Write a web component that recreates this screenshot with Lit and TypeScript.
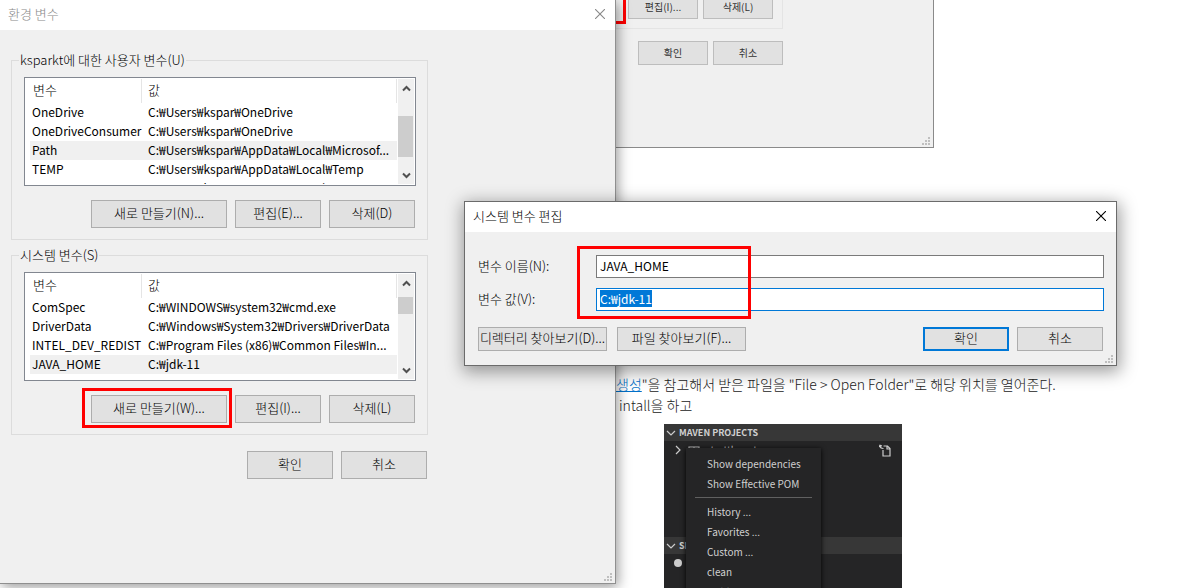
import { LitElement, html, css, svg } from "lit";
import { customElement, property } from "lit/decorators.js";
import { classMap } from "lit/directives/class-map.js";

type Row = [name: string, value: string];

const userRows: Row[] = [
  ["OneDrive", "C:₩Users₩kspar₩OneDrive"],
  ["OneDriveConsumer", "C:₩Users₩kspar₩OneDrive"],
  ["Path", "C:₩Users₩kspar₩AppData₩Local₩Microsof..."],
  ["TEMP", "C:₩Users₩kspar₩AppData₩Local₩Temp"],
  ["TMP", "C:₩Users₩kspar₩AppData₩Local₩Temp"],
];

const systemRows: Row[] = [
  ["ComSpec", "C:₩WINDOWS₩system32₩cmd.exe"],
  ["DriverData", "C:₩Windows₩System32₩Drivers₩DriverData"],
  ["INTEL_DEV_REDIST", "C:₩Program Files (x86)₩Common Files₩In..."],
  ["JAVA_HOME", "C:₩jdk-11"],
];

const closeIcon = html`<svg class="x" viewBox="0 0 10 10" width="10" height="10" aria-hidden="true">
  <path d="M0 0l10 10M10 0l-10 10" fill="none" stroke="currentColor" stroke-width="1.1" />
</svg>`;

const gripCells = [[6, 0], [3, 3], [6, 3], [0, 6], [3, 6], [6, 6]];
const grip = html`<svg class="grip" viewBox="0 0 8 8" width="8" height="8" aria-hidden="true">
  ${gripCells.map(([x, y]) => svg`<rect x=${x} y=${y} width="2" height="2" fill="#bfbfbf" />`)}
</svg>`;

const base = css`
  * { box-sizing: border-box; }
  button, input {
    font: inherit;
    color: inherit;
    margin: 0;
  }
  .btn {
    height: 28px;
    width: 86px;
    padding: 0 0 2px;
    border: 1px solid #adadad;
    border-radius: 0;
    background: #e1e1e1;
    white-space: nowrap;
    flex: none;
  }
  .close {
    border: 0;
    padding: 0;
    background: none;
    display: flex;
  }
  .titlebar {
    display: flex;
    align-items: center;
    justify-content: space-between;
    height: 30px;
    background: #fff;
  }
  .grip {
    position: absolute;
    right: 3px;
    bottom: 2px;
  }
  .mark {
    position: absolute;
    border: 3px solid #f00;
    pointer-events: none;
  }
`;

@customElement("variable-list")
class VariableList extends LitElement {
  @property({ attribute: false }) rows: Row[] = [];
  @property({ type: Number }) selected = 0;
  @property({ type: Number }) thumbTop = 0;
  @property({ type: Number }) thumbSize = 20;

  static styles = css`
    * { box-sizing: border-box; }
    :host {
      display: flex;
      height: 109px;
      padding: 1px 1px 1px 5px;
      border: 1px solid #828790;
      background: #fff;
    }
    .view {
      flex: 1;
      min-width: 0;
      overflow: hidden;
    }
    table {
      width: 100%;
      table-layout: fixed;
      border-collapse: separate;
      border-spacing: 0;
    }
    th, td {
      height: 19px;
      line-height: 17px;
      padding: 0 0 2px 6px;
      font-weight: inherit;
      text-align: left;
      white-space: nowrap;
    }
    td { font-size: 12px; font-weight: 400; }
    td:first-child { padding-left: 2px; }
    th {
      height: 24px;
      line-height: 22px;
      border-right: 1px solid #e5e5e5;
    }
    th:first-child { width: 112px; padding-left: 3px; }
    .on td { background: #f0f0f0; }
    .bar {
      flex: none;
      width: 16px;
      margin-left: 1px;
      background: #f0f0f0;
      display: grid;
      grid-template-rows: 18px 1fr 18px;
      justify-items: center;
      align-items: center;
    }
    .track { align-self: stretch; justify-self: stretch; }
    .thumb { width: 15px; background: #cdcdcd; }
    path { fill: none; stroke: #505050; stroke-width: 2; }
  `;

  render() {
    return html`
      <div class="view">
        <table>
          <thead><tr><th>변수</th><th>값</th></tr></thead>
          <tbody>
            ${this.rows.map(([name, value], i) => html`
              <tr class=${classMap({ on: i === this.selected })}><td>${name}</td><td>${value}</td></tr>`)}
          </tbody>
        </table>
      </div>
      <div class="bar">
        <svg width="9" height="7" viewBox="0 0 9 7"><path d="M1 5.5l3.5-3.5l3.5 3.5" /></svg>
        <div class="track">
          <div class="thumb" style="margin-top:${this.thumbTop}px;height:${this.thumbSize}px"></div>
        </div>
        <svg width="9" height="7" viewBox="0 0 9 7"><path d="M1 1.5l3.5 3.5l3.5-3.5" /></svg>
      </div>
    `;
  }
}

@customElement("environment-window")
class EnvironmentWindow extends LitElement {
  static styles = [base, css`
    :host {
      display: block;
      background: #f0f0f0;
      border-right: 1px solid #8f8f8f;
      border-bottom: 1px solid #8f8f8f;
      box-shadow: 2px 3px 12px rgba(0, 0, 0, .4);
    }
    .titlebar { padding: 0 10px 2px 8px; color: #888; }
    .body {
      width: 428px;
      padding: 22px 0 104px 11px;
    }
    fieldset {
      position: relative;
      min-width: 0;
      margin: 0 0 7px;
      padding: 9px 11px 11px 12px;
      border: 1px solid #dcdcdc;
    }
    legend {
      margin-left: -5px;
      padding: 0 1px;
      line-height: 16px;
    }
    .actions {
      display: flex;
      justify-content: flex-end;
      gap: 8px;
      padding: 14px 1px 0 0;
    }
    .wide { width: 136px; }
    .confirm { padding: 9px 1px 0 0; }
    .new { right: 195px; bottom: 6px; width: 150px; height: 40px; }
  `];

  render() {
    return html`
      <div class="titlebar"><span>환경 변수</span>
        <button class="close" aria-label="닫기">${closeIcon}</button></div>
      <div class="body">
        <fieldset>
          <legend>ksparkt에 대한 사용자 변수(U)</legend>
          <variable-list .rows=${userRows} .selected=${2} .thumbTop=${19} .thumbSize=${41}></variable-list>
          <div class="actions">
            <button class="btn wide">새로 만들기(N)...</button>
            <button class="btn">편집(E)...</button>
            <button class="btn">삭제(D)</button>
          </div>
        </fieldset>
        <fieldset>
          <legend>시스템 변수(S)</legend>
          <variable-list .rows=${systemRows} .selected=${3} .thumbTop=${5} .thumbSize=${17}></variable-list>
          <div class="actions">
            <button class="btn wide">새로 만들기(W)...</button>
            <button class="btn">편집(I)...</button>
            <button class="btn">삭제(L)</button>
          </div>
          <div class="mark new"></div>
        </fieldset>
        <div class="actions confirm">
          <button class="btn">확인</button>
          <button class="btn">취소</button>
        </div>
      </div>
      ${grip}
    `;
  }
}

@customElement("edit-dialog")
class EditDialog extends LitElement {
  static styles = [base, css`
    :host {
      display: block;
      background: #f0f0f0;
      border: 1px solid #6b6b6b;
      box-shadow: 1px 4px 16px 2px rgba(0, 0, 0, .38);
    }
    .titlebar { padding: 0 10px 2px 8px; }
    form {
      display: grid;
      grid-template-columns: 118px 1fr;
      row-gap: 10px;
      align-items: center;
      padding: 23px 12px 14px 13px;
    }
    label { padding-bottom: 2px; }
    input {
      height: 23px;
      width: 100%;
      padding: 0 3px 2px;
      border: 1px solid #7a7a7a;
      border-radius: 0;
      background: #fff;
      font-size: 12px;
      font-weight: 400;
      outline: none;
    }
    .active { border-color: #0078d7; }
    input::selection { background: #0078d7; color: #fff; }
    .actions {
      grid-column: 1 / -1;
      display: flex;
      gap: 8px;
      padding: 6px 1px 0 0;
    }
    .actions .btn { height: 24px; }
    .actions .browse { width: 129px; margin-right: 2px; }
    .actions .ok { margin-left: auto; border: 2px solid #0078d7; }
    .fields { left: 112px; top: 44px; width: 174px; height: 73px; }
  `];

  firstUpdated() {
    const field = this.renderRoot.querySelector<HTMLInputElement>(".active");
    field?.focus();
    field?.select();
  }

  render() {
    return html`
      <div class="titlebar"><span>시스템 변수 편집</span>
        <button class="close" aria-label="닫기">${closeIcon}</button></div>
      <form>
        <label for="name">변수 이름(N):</label>
        <input id="name" type="text" value="JAVA_HOME" />
        <label for="value">변수 값(V):</label>
        <input id="value" class="active" type="text" value="C:₩jdk-11" />
        <div class="actions">
          <button type="button" class="btn browse">디렉터리 찾아보기(D)...</button>
          <button type="button" class="btn browse">파일 찾아보기(F)...</button>
          <button type="button" class="btn ok">확인</button>
          <button type="button" class="btn">취소</button>
        </div>
      </form>
      <div class="mark fields"></div>
      ${grip}
    `;
  }
}

@customElement("maven-panel")
class MavenPanel extends LitElement {
  static styles = css`
    * { box-sizing: border-box; }
    :host {
      display: block;
      position: relative;
      overflow: hidden;
      background: #252526;
      color: #d0d0d0;
      font: 10px/18px "Noto Sans CJK KR", sans-serif;
    }
    .head {
      display: flex;
      align-items: center;
      gap: 3px;
      height: 17px;
      padding-left: 2px;
      background: #373737;
      font-size: 9px;
      line-height: 15px;
      font-weight: 700;
    }
    .project {
      display: flex;
      align-items: center;
      gap: 6px;
      height: 18px;
      padding: 0 11px 0 10px;
    }
    .project .file { margin-left: auto; }
    .space { height: 78px; }
    .dot {
      width: 8px;
      height: 8px;
      margin: 5px 10px;
      border-radius: 50%;
      background: #ccc;
    }
    svg { fill: none; stroke: #ccc; stroke-width: 1.2; flex: none; }
    .menu {
      position: absolute;
      left: 22px;
      top: 24px;
      width: 135px;
      margin: 0;
      padding: 6px 9px;
      list-style: none;
      background: #252526;
      box-shadow: 0 1px 5px #000;
    }
    .menu li { height: 20px; line-height: 20px; padding-left: 12px; white-space: nowrap; }
    .menu .sep { height: 5px; padding: 0; border-top: 1px solid #606060; margin-top: 3px; }
  `;

  render() {
    return html`
      <div class="head">
        <svg width="10" height="8" viewBox="0 0 10 8"><path d="M1 2l4 4l4-4" /></svg>MAVEN PROJECTS
      </div>
      <div class="project">
        <svg width="8" height="10" viewBox="0 0 8 10"><path d="M2 1l4 4l-4 4" /></svg>
        <svg width="12" height="8" viewBox="0 0 12 8"><path d="M1 8V1h5v7M6 1h5v7" /></svg>
        <span>startthegate</span>
        <svg class="file" width="12" height="13" viewBox="0 0 12 13"><path d="M4 6V12h7V4.500L8.500 2H4.500M8 2v3h3M4.500 4.500C2 4.500 1 3.500 1 1.500M0 3L1 1.200L3 2" /></svg>
      </div>
      <div class="space"></div>
      <div class="head">
        <svg width="10" height="8" viewBox="0 0 10 8"><path d="M1 2l4 4l4-4" /></svg>SP
      </div>
      <div class="dot"></div>
      <ul class="menu">
        <li>Show dependencies</li>
        <li>Show Effective POM</li>
        <li class="sep" role="separator"></li>
        <li>History ...</li>
        <li>Favorites ...</li>
        <li>Custom ...</li>
        <li>clean</li>
        <li>validate</li>
      </ul>
    `;
  }
}

@customElement("app-root")
class AppRoot extends LitElement {
  static styles = [base, css`
    :host {
      display: block;
      position: relative;
      height: 100vh;
      overflow: hidden;
      background: #fff;
      color: #000;
      font: 300 13px/16px "Noto Sans CJK KR", sans-serif;
    }
    .env {
      position: absolute;
      left: 0;
      top: 0;
      width: 616px;
    }
    .edit {
      position: absolute;
      left: 464px;
      top: 201px;
      width: 653px;
    }
    article { padding-left: 616px; }
    .shot {
      position: relative;
      width: 318px;
      height: 148px;
      margin: 0 0 226px;
      border: 1px solid #8a8a8a;
      border-width: 0 1px 1px 0;
      background: #f0f0f0;
      color: #333;
      font-size: 10px;
      font-weight: 400;
    }
    .row {
      display: flex;
      gap: 5px;
      width: 167px;
      height: 29px;
      padding-right: 9px;
      justify-content: flex-end;
      border: 1px solid #e4e4e4;
      border-width: 0 1px 1px 0;
    }
    .row .btn { margin-top: -5px; }
    .row.last { height: auto; border: 0; padding: 17px 0 0; }
    .shot .btn { width: 70px; height: 24px; padding: 0; border-color: #bdbdbd; }
    .shot .mark { left: -100px; top: -20px; width: 110px; height: 44px; }
    p {
      margin: 0;
      color: #222;
      font-size: 14px;
      line-height: 21px;
      white-space: nowrap;
    }
    a { color: #0070c9; text-decoration: underline; }
    .second { padding-left: 3px; }
    .panel { width: 238px; height: 180px; margin: 8px 0 0 48px; }
  `];

  render() {
    return html`
      <article>
        <div class="shot">
          <div class="row">
            <button class="btn">편집(I)...</button>
            <button class="btn">삭제(L)</button>
          </div>
          <div class="row last">
            <button class="btn">확인</button>
            <button class="btn">취소</button>
          </div>
          <div class="mark"></div>
          ${grip}
        </div>
        <p><a href="#project">생성</a>"을 참고해서 받은 파일을 "File &gt; Open Folder"로 해당 위치를 열어준다.</p>
        <p class="second">intall을 하고</p>
        <maven-panel class="panel"></maven-panel>
      </article>
      <environment-window class="env"></environment-window>
      <edit-dialog class="edit"></edit-dialog>
    `;
  }
}
